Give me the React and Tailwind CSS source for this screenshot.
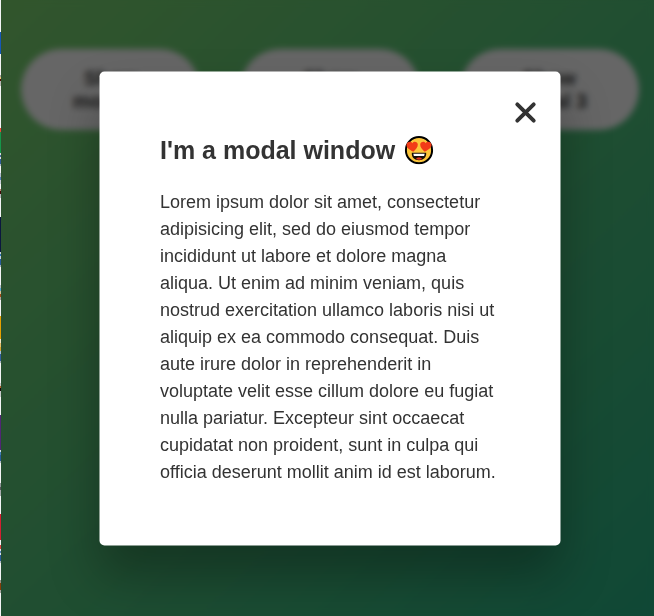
const strip = [
  [32, '#f3f4f5'], [22, '#1557b7'], [21, '#f3f4f5'], [2, '#a8a59d'], [2, '#e8c67a'], [2, '#501008'], [5, '#b8b8b5'],
  [42, '#f3f4f5'], [4, '#ef4438'], [21, '#16964a'], [2, '#d8dce0'], [2, '#496a99'], [2, '#dce1e5'], [5, '#315c98'], [2, '#a9b4c4'],
  [7, '#f3f4f5'], [4, '#b4bdcc'], [3, '#597fb9'], [4, '#c9cfd7'], [5, '#f3f4f5'], [2, '#b88374'], [3, '#470909'], [4, '#b3b8bd'],
  [19, '#f3f4f5'], [35, '#0b173f'], [2, '#c6d0dc'], [2, '#3175ba'], [3, '#bfd1e3'], [6, '#295b9d'], [2, '#a3afbd'],
  [18, '#f3f4f5'], [3, '#b3bec5'], [3, '#5ba9d8'], [3, '#d6c49a'], [3, '#a54c18'], [3, '#a9a3a0'],
  [16, '#f3f4f5'], [23, '#e6a000'], [4, '#f2e7cb'], [4, '#e6bf6b'], [4, '#d8a62e'], [3, '#aac0d7'], [7, '#315f9e'], [2, '#adb5c0'],
  [20, '#f3f4f5'], [3, '#c5c5c4'], [2, '#ad5b27'], [3, '#180d0b'], [6, '#c8cacb'], [18, '#f3f4f5'], [35, '#512675'],
  [2, '#d3dce5'], [3, '#417eb9'], [6, '#285b98'], [2, '#b2bac4'], [20, '#f3f4f5'], [4, '#92969a'], [3, '#55575b'], [6, '#a8abad'],
  [18, '#f3f4f5'], [26, '#d51f31'], [5, '#f3f4f5'], [4, '#d94543'], [2, '#dce1e6'], [2, '#5b86b7'], [2, '#d9e1e8'], [6, '#285b98'],
  [2, '#b2bac4'], [17, '#f3f4f5'], [3, '#9a9088'], [7, '#873e08'], [3, '#aaa5a0'], [33, '#f3f4f5'],
];

function TriggerButton({ number }) {
  return (
    <button className="h-[81px] w-[179.3px] rounded-full bg-white px-[35px] text-center text-[20px] leading-[23px] font-semibold text-[#444]">
      Show
      <br />
      modal {number}
    </button>
  );
}

function HeartEyes() {
  return (
    <svg className="h-[29px] w-[29px] shrink-0" viewBox="0 0 29 29" role="img" aria-label="Heart eyes">
      <circle cx="14.5" cy="14.7" r="13.1" fill="#fcc53a" stroke="#000" strokeWidth="2" />
      <path d="M8.8 16.2C4.6 14.2 1.8 12 2 9.3c.3-3.1 4.1-4 5.9-1.5 1.5-2.5 5.2-1.6 5.4 1.3.1 2.7-2 5.1-4.5 7.1Z" fill="#f23b18" />
      <path d="M20.2 16.2c4.2-2 7-4.2 6.8-6.9-.3-3.1-4.1-4-5.9-1.5-1.5-2.5-5.2-1.6-5.4 1.3-.1 2.7 2 5.1 4.5 7.1Z" fill="#f23b18" />
      <path d="M7.3 17.3h14.4c.3 4.7-2.8 7.4-7.2 7.4s-7.5-2.7-7.2-7.4Z" fill="#150d08" />
      <path d="M8.8 18.3h11.4l-.6 2.3H9.4Z" fill="#fff" />
      <path d="M11.4 23.5c1.7-1.9 4.5-1.9 6.2 0-1.8 1-4.4 1-6.2 0Z" fill="#e73622" />
    </svg>
  );
}

export default function App() {
  return (
    <div className="relative flex h-[616px] w-[654px] overflow-hidden font-['Liberation_Sans',Arial,sans-serif]">
      <div className="flex w-px shrink-0 flex-col">
        {strip.map(([height, color], i) => (
          <div key={i} className="shrink-0" style={{ height, backgroundColor: color }} />
        ))}
      </div>
      <main className="flex flex-1 items-start gap-10 bg-[linear-gradient(to_top_left,#28b487,#7dd56f)] pt-[49px] pl-5">
        <TriggerButton number={1} />
        <TriggerButton number={2} />
        <TriggerButton number={3} />
      </main>
      <div className="absolute inset-y-0 right-0 left-px bg-black/60 backdrop-blur-[3px]" />
      <div className="absolute inset-0 flex items-start pt-[72px] pl-[100px]">
        <section className="relative h-[474px] w-[461px] translate-x-[-0.5px] translate-y-[-0.5px] rounded-[5px] bg-white py-[60px] pr-[59px] pl-[60.5px] text-[#333] shadow-[0_30px_50px_rgba(0,0,0,0.3)]">
          <button aria-label="Close" className="absolute top-[29px] right-[23px] flex h-6 w-6 items-center justify-center">
            <svg className="h-6 w-6" viewBox="0 0 24 24" fill="none" stroke="#333" strokeWidth="3.9" strokeLinecap="round">
              <path d="m3.8 3.8 16.4 16.4M20.2 3.8 3.8 20.2" />
            </svg>
          </button>
          <h1 className="mb-[19px] flex h-[37.5px] items-center gap-[9px] text-[25px] leading-[37.5px] font-semibold whitespace-nowrap">
            I'm a modal window <HeartEyes />
          </h1>
          <p className="text-[18px] leading-[27px]">
            Lorem ipsum dolor sit amet, consectetur adipisicing elit, sed do eiusmod tempor incididunt ut labore et dolore magna aliqua. Ut enim ad minim veniam, quis nostrud exercitation ullamco laboris nisi ut aliquip ex ea commodo consequat. Duis aute irure dolor in reprehenderit in voluptate velit esse cillum dolore eu fugiat nulla pariatur. Excepteur sint occaecat cupidatat non proident, sunt in culpa qui officia deserunt mollit anim id est laborum.
          </p>
        </section>
      </div>
    </div>
  );
}
